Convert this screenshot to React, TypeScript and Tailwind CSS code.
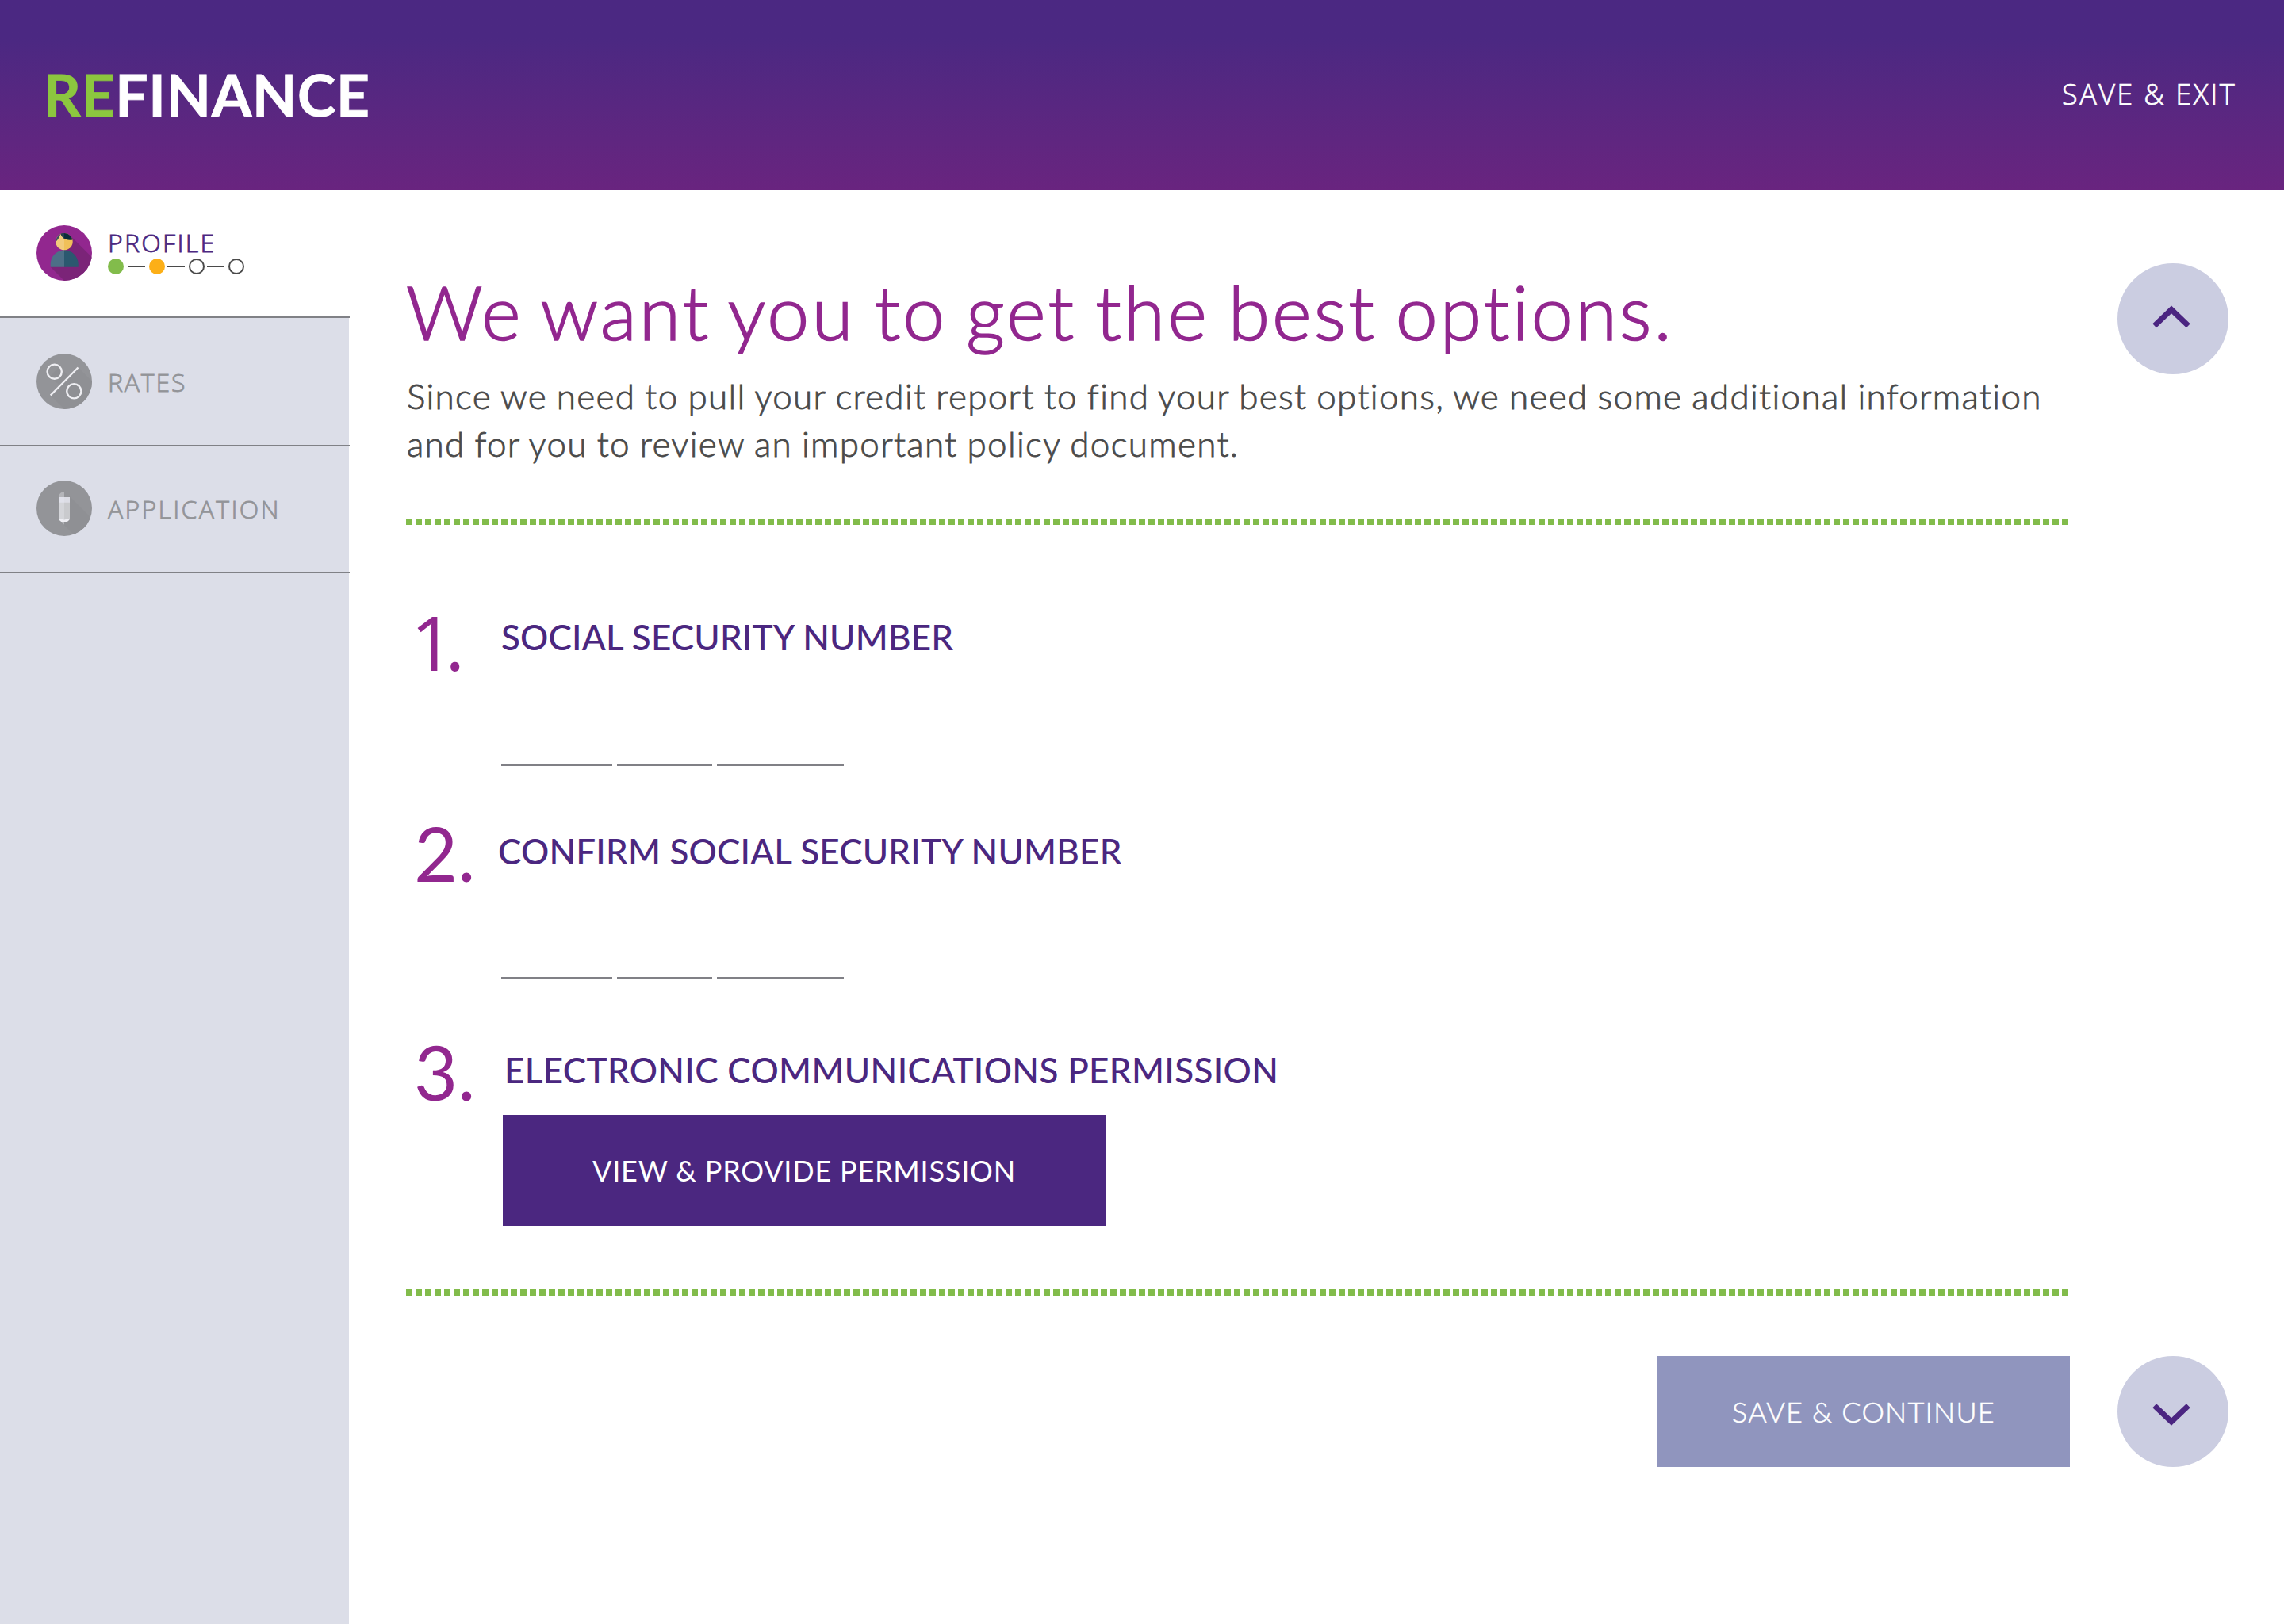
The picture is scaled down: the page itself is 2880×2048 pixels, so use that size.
import { ReactNode } from "react";

interface NavItemProps {
  label: string;
  icon: ReactNode;
  className: string;
  labelClassName: string;
  children?: ReactNode;
}

interface StepProps {
  number: string;
  label: string;
  className: string;
  numberClassName: string;
  labelClassName: string;
  children: ReactNode;
}

const ProfileIcon = () => (
  <svg viewBox="0 0 70 70" className="h-[70px] w-[70px]">
    <clipPath id="profile-clip">
      <circle cx="35" cy="35" r="35" />
    </clipPath>
    <clipPath id="head-clip">
      <circle cx="35" cy="20.8" r="10.7" />
    </clipPath>
    <circle cx="35" cy="35" r="35" fill="#92278f" />
    <path
      d="M44 14.5 L71 41.5 V71 H36 L17.7 52.7 Z"
      fill="#7b2478"
      clipPath="url(#profile-clip)"
    />
    <g clipPath="url(#head-clip)">
      <rect x="24" y="10" width="11" height="22" fill="#f2cb7c" />
      <rect x="35" y="10" width="11" height="22" fill="#f0c05a" />
      <path d="M24 21 C27 19 28 16 29.5 13 L32 9 H24 Z" fill="#3a5261" />
      <path d="M30.3 9 C31 15 37 20.5 46 18.2 V9 Z" fill="#0a2c3b" />
      <path d="M30.3 9 C30.8 12.5 32.5 15.2 35 17 V9 Z" fill="#233f4d" />
    </g>
    <path d="M17.7 52.7 V49 A17.4 17.6 0 0 1 35 31.4 V52.7 Z" fill="#4d6f87" />
    <path d="M35 31.4 A17.4 17.6 0 0 1 52.7 49 V52.7 H35 Z" fill="#2b586f" />
  </svg>
);

const RatesIcon = () => (
  <svg viewBox="0 0 70 70" className="h-[70px] w-[70px]">
    <clipPath id="rates-clip">
      <circle cx="35" cy="35" r="35" />
    </clipPath>
    <circle cx="35" cy="35" r="35" fill="#939498" />
    <path
      d="M52.7 17.3 L71 36 V71 H36 L17.7 52.7 L30 40 L16 30 L29 16 L40 28 Z"
      fill="#8f9094"
      clipPath="url(#rates-clip)"
    />
    <g fill="none" stroke="#eeeef2" strokeWidth="2.4">
      <circle cx="22.7" cy="22.7" r="9.1" />
      <circle cx="47.3" cy="47.3" r="9.1" />
      <path d="M52.5 17.5 L17.7 52.5" />
    </g>
  </svg>
);

const ApplicationIcon = () => (
  <svg viewBox="0 0 70 70" className="h-[70px] w-[70px]">
    <clipPath id="application-clip">
      <circle cx="35" cy="35" r="35" />
    </clipPath>
    <circle cx="35" cy="35" r="35" fill="#939498" />
    <path
      d="M42 20 L71 49 V71 H50 L28 49.5 Z"
      fill="#8f9094"
      clipPath="url(#application-clip)"
    />
    <path d="M28 21 A7 7 0 0 1 35 14 V21 Z" fill="#b4b5b9" />
    <rect x="28" y="21" width="7" height="7" fill="#e0e1ea" />
    <rect x="35" y="21" width="7" height="7" fill="#dcdde5" />
    <path d="M28 27.7 H35 V51 H30 L28 49 Z" fill="#d4d5d9" />
    <path d="M35 27.7 H42 V49 L40 51 H35 Z" fill="#c9cacd" />
    <path
      d="M28.6 49.2 Q31 47.2 32.6 48.6 Q35 50.4 37.4 48.6 Q39 47.2 41.4 49.2 L39 52 H31 Z"
      fill="#eeeef3"
    />
    <path d="M31.5 52 H35 V55.7 Z" fill="#b4b5b9" />
  </svg>
);

const StepProgress = () => (
  <svg viewBox="0 0 172 20" className="h-5 w-[172px]">
    <circle cx="10" cy="10" r="10" fill="#82bc4b" />
    <circle cx="62" cy="10" r="10" fill="#fcaf17" />
    <g fill="none" stroke="#4a4a4a" strokeWidth="2">
      <path d="M25 10 H47 M75 10 H97 M125 10 H147" />
      <circle cx="112" cy="10" r="9" />
      <circle cx="162" cy="10" r="9" />
    </g>
  </svg>
);

const NavItem = ({
  label,
  icon,
  className,
  labelClassName,
  children,
}: NavItemProps) => (
  <li
    className={`flex w-[441px] items-start border-b-2 border-[#808186] pl-[46px] ${className}`}
  >
    {icon}
    <div className="ml-5">
      <a
        className={`block text-[32px] leading-8 font-light whitespace-nowrap [-webkit-text-stroke:0.8px] ${labelClassName}`}
      >
        {label}
      </a>
      {children}
    </div>
  </li>
);

const Divider = () => (
  <div className="h-2 w-[2096px] bg-[repeating-linear-gradient(90deg,#82bc4b_0_8px,transparent_8px_12px)]" />
);

const Step = ({
  number,
  label,
  className,
  numberClassName,
  labelClassName,
  children,
}: StepProps) => (
  <li className={`flex items-start ${className}`}>
    <span
      className={`w-[120px] shrink-0 text-[95px] leading-24 text-[#92278f] ${numberClassName}`}
    >
      {number}
    </span>
    <div>
      <h2
        className={`text-[44px] leading-15 font-medium whitespace-nowrap text-[#4b2780] ${labelClassName}`}
      >
        {label}
      </h2>
      {children}
    </div>
  </li>
);

const SsnInputs = ({ className }: { className: string }) => (
  <div className={`flex gap-1.5 ${className}`}>
    <input className="w-[140px] border-b-2 border-[#808086] outline-none" />
    <input className="w-[120px] border-b-2 border-[#808086] outline-none" />
    <input className="w-[160px] border-b-2 border-[#808086] outline-none" />
  </div>
);

const ScrollButton = ({ points }: { points: string }) => (
  <button className="h-[140px] w-[140px] rounded-full bg-[#cbcde1]">
    <svg viewBox="0 0 140 140" className="h-full w-full">
      <polyline
        points={points}
        fill="none"
        stroke="#4b2581"
        strokeWidth="7"
      />
    </svg>
  </button>
);

const App = () => {
  return (
    <div className="flex h-[2048px] w-[2880px] flex-col overflow-hidden bg-white font-['Lato',sans-serif]">
      <header className="flex h-60 shrink-0 items-center justify-between bg-linear-to-b from-[#4b2882] from-20% to-[#69247f] pr-[60px] pb-[3px] pl-[55px]">
        <h1 className="text-[73px] leading-24 font-bold tracking-[0.7px] text-white [-webkit-text-stroke:0.8px]">
          <span className="text-[#8cc63f]">RE</span>FINANCE
        </h1>
        <a className="font-['Open_Sans',sans-serif] text-[36px] font-light tracking-[2.4px] text-white [-webkit-text-stroke:0.7px]">
          SAVE &amp; EXIT
        </a>
      </header>

      <div className="flex flex-1">
        <nav className="w-[440px] shrink-0 bg-[#dcdee8] font-['Open_Sans',sans-serif]">
          <ul>
            <NavItem
              label="PROFILE"
              icon={<ProfileIcon />}
              className="h-[161px] bg-white pt-11"
              labelClassName="pt-1.5 tracking-[2.3px] text-[#4b2780]"
            >
              <div className="mt-1">
                <StepProgress />
              </div>
            </NavItem>
            <NavItem
              label="RATES"
              icon={<RatesIcon />}
              className="h-[162px] pt-[45px]"
              labelClassName="pt-5 tracking-[1.8px] text-[#939498]"
            />
            <NavItem
              label="APPLICATION"
              icon={<ApplicationIcon />}
              className="h-[160px] pt-[43px]"
              labelClassName="pt-5 tracking-[2.3px] text-[#939498]"
            />
          </ul>
        </nav>

        <main className="flex h-[1610px] gap-[60px] pl-[72px]">
          {/* Form */}
          <div className="w-[2098px] pt-[104px]">
            <h1 className="text-[95px] leading-24 font-light tracking-[3.1px] whitespace-nowrap text-[#92278f] [-webkit-text-stroke:1.7px] [word-spacing:-5px]">
              We want you to get the best options.
            </h1>
            <p className="mt-[29px] mb-[65px] pl-px text-[44px] leading-15 font-light tracking-[1.3px] whitespace-nowrap text-[#4a4a4a] [-webkit-text-stroke:0.8px] [word-spacing:-1.3px]">
              Since we need to pull your credit report to find your best
              options, we need some additional information
              <br />
              and for you to review an important policy document.
            </p>
            <Divider />

            <ol className="mt-[99px] mb-20">
              <Step
                number="1."
                label="SOCIAL SECURITY NUMBER"
                className="h-[266px]"
                numberClassName="pl-1.5 font-['Open_Sans',sans-serif] tracking-[-11px]"
                labelClassName="mt-3 tracking-[0.18px]"
              >
                <SsnInputs className="h-[133px]" />
              </Step>
              <Step
                number="2."
                label="CONFIRM SOCIAL SECURITY NUMBER"
                className="h-[276px]"
                numberClassName="pl-2.5"
                labelClassName="mt-4 -ml-1 tracking-[0.18px]"
              >
                <SsnInputs className="h-[131px]" />
              </Step>
              <Step
                number="3."
                label="ELECTRONIC COMMUNICATIONS PERMISSION"
                className="h-[243px]"
                numberClassName="pl-2.5"
                labelClassName="mt-4 ml-1 tracking-[0.35px]"
              >
                <button className="mt-[27px] ml-0.5 h-[140px] w-[760px] bg-[#4b2780] text-[36px] tracking-[0.8px] whitespace-nowrap text-white">
                  VIEW &amp; PROVIDE PERMISSION
                </button>
              </Step>
            </ol>
            <Divider />

            <div className="mt-19 flex justify-end">
              <button className="h-[140px] w-[520px] bg-[#9095be] text-[36px] font-light tracking-[1.2px] whitespace-nowrap text-white [-webkit-text-stroke:0.5px]">
                SAVE &amp; CONTINUE
              </button>
            </div>
          </div>

          {/* Page navigation */}
          <div className="flex flex-col justify-between pt-[92px]">
            <ScrollButton points="46.7,78.7 68,58.4 89.3,78.7" />
            <ScrollButton points="46.7,62.7 68,83 89.3,62.7" />
          </div>
        </main>
      </div>
    </div>
  );
};

export default App;
